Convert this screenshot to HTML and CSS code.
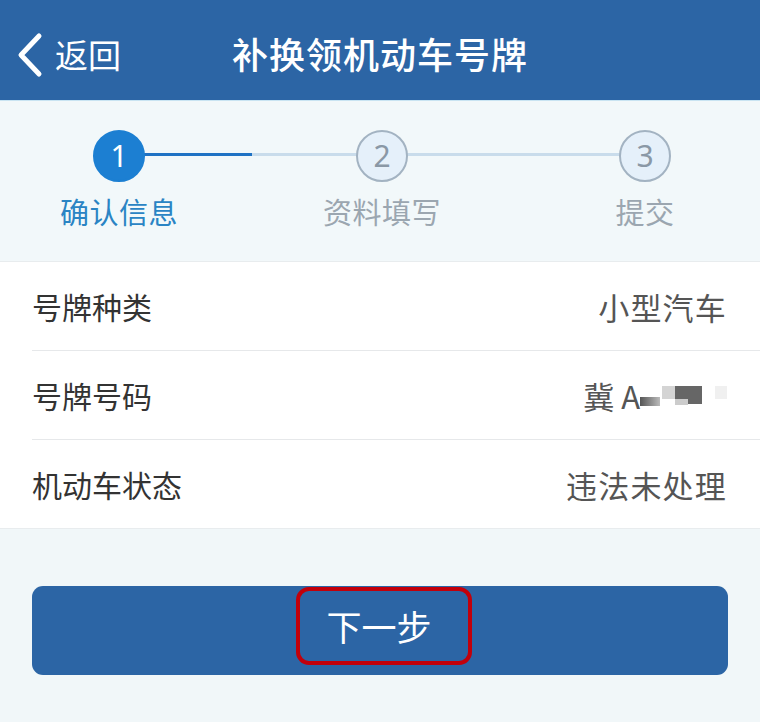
FILE: index.html
```html
<!DOCTYPE html>
<html lang="zh-CN">
<head>
    <meta charset="UTF-8">
    <meta name="viewport" content="width=device-width, initial-scale=1.0">
    <title>补换领机动车号牌</title>
    <link rel="stylesheet" href="styles.css">
</head>
<body>
    <div class="cabecera">
        <div class="volver">
            <svg class="flecha" width="28" height="46" viewBox="0 0 28 46">
                <path d="M23 4 L5 23 L23 42" fill="none" stroke="#fff" stroke-width="5" stroke-linecap="round" stroke-linejoin="round"/>
            </svg>
            <span>返回</span>
        </div>
        <div class="titulo">补换领机动车号牌</div>
    </div>

    <div class="pasos">
        <div class="linea linea-1"></div>
        <div class="linea linea-2"></div>
        <div class="paso activo">
            <div class="circulo">1</div>
            <div class="nombre">确认信息</div>
        </div>
        <div class="paso">
            <div class="circulo">2</div>
            <div class="nombre">资料填写</div>
        </div>
        <div class="paso">
            <div class="circulo">3</div>
            <div class="nombre">提交</div>
        </div>
    </div>

    <div class="lista">
        <div class="fila">
            <span class="etiqueta">号牌种类</span>
            <span class="valor">小型汽车</span>
        </div>
        <div class="fila">
            <span class="etiqueta">号牌号码</span>
            <span class="valor matricula">冀 A<span class="mosaico">
                <i class="m1"></i><i class="m2"></i><i class="m3"></i><i class="m4"></i><i class="m5"></i>
            </span></span>
        </div>
        <div class="fila">
            <span class="etiqueta">机动车状态</span>
            <span class="valor">违法未处理</span>
        </div>
    </div>

    <div class="pie">
        <button type="button" class="siguiente"><span class="marca">下一步</span></button>
    </div>
</body>
</html>
```

FILE: styles.css
```css
body {
    margin: 0;
    width: 760px;
    height: 722px;
    background-color: #f1f7f9;
    font-family: "Noto Sans CJK SC", "Noto Sans", sans-serif;
    overflow: hidden;
}
.cabecera {
    height: 100px;
    background-color: #2c65a5;
    color: #fff;
    display: flex;
    align-items: center;
    justify-content: center;
    position: relative;
}
.volver {
    position: absolute;
    left: 16px;
    top: 32px;
    display: flex;
    align-items: center;
    font-size: 33px;
    line-height: 46px;
}
.volver span {
    margin-left: 11px;
    margin-top: -2px;
}
.titulo {
    font-size: 36px;
    font-weight: 500;
    letter-spacing: 1px;
    margin-top: 6px;
}
.pasos {
    height: 162px;
    background-color: #f2f8fa;
    border-top: 1px solid #c9e4f2;
    border-bottom: 1px solid #e8ecee;
    display: flex;
    justify-content: space-between;
    padding: 0 35px 0 39px;
    box-sizing: border-box;
    position: relative;
}
.linea {
    position: absolute;
    top: 52px;
    height: 3px;
    background-color: #c9dceb;
}
.linea-1 {
    left: 144px;
    width: 213px;
    background: linear-gradient(to right, #1f72c4 0, #1f72c4 108px, #c9dceb 108px);
}
.linea-2 {
    left: 406px;
    width: 214px;
}
.paso {
    width: 160px;
    display: flex;
    flex-direction: column;
    align-items: center;
    position: relative;
    z-index: 1;
}
.circulo {
    margin-top: 29px;
    width: 48px;
    height: 48px;
    border-radius: 50%;
    border: 2px solid #a3b3c2;
    background-color: #e5f0fa;
    color: #8a98a6;
    font-family: "Noto Sans", sans-serif;
    font-size: 30px;
    line-height: 48px;
    text-align: center;
}
.nombre {
    margin-top: 8px;
    font-size: 29px;
    letter-spacing: 0.5px;
    color: #9ba6b0;
}
.activo .circulo {
    background-color: #1c7fd2;
    border-color: #1c7fd2;
    color: #fff;
}
.activo .nombre {
    color: #2a84c4;
}
.lista {
    background-color: #fff;
    padding-left: 32px;
    border-bottom: 1px solid #e8ecee;
}
.fila {
    height: 88px;
    display: flex;
    align-items: center;
    justify-content: space-between;
    padding-right: 33px;
    border-bottom: 1px solid #e6e8ea;
    font-size: 30px;
    color: #333;
}
.fila:last-child {
    border-bottom: none;
}
.valor {
    color: #555;
    font-size: 31px;
    letter-spacing: 1.2px;
}
.matricula {
    display: flex;
    align-items: center;
    letter-spacing: 0;
}
.mosaico {
    position: relative;
    width: 87px;
    height: 30px;
    display: inline-block;
}
.mosaico i {
    position: absolute;
}
.m1 {
    left: 0;
    top: 17px;
    width: 20px;
    height: 9px;
    background: linear-gradient(to right, #555, #bbb);
}
.m2 {
    left: 22px;
    top: 6px;
    width: 13px;
    height: 13px;
    background-color: #d4d4d4;
}
.m3 {
    left: 35px;
    top: 6px;
    width: 27px;
    height: 18px;
    background-color: #666;
}
.m4 {
    left: 35px;
    top: 19px;
    width: 13px;
    height: 6px;
    background-color: #ccc;
}
.m5 {
    left: 75px;
    top: 6px;
    width: 12px;
    height: 13px;
    background-color: #f0f0f0;
}
.pie {
    padding: 57px 32px 0;
}
.siguiente {
    width: 100%;
    height: 89px;
    background-color: #2c65a5;
    border: none;
    border-radius: 11px;
    display: flex;
    align-items: center;
    justify-content: center;
    padding: 0;
    font-family: "Noto Sans CJK SC", sans-serif;
    cursor: pointer;
}
.marca {
    width: 158px;
    height: 70px;
    padding-right: 10px;
    border: 4px solid #c2000b;
    border-radius: 13px;
    color: #fff;
    font-size: 35px;
    line-height: 70px;
    margin-top: -10px;
    margin-left: 8px;
}
```
